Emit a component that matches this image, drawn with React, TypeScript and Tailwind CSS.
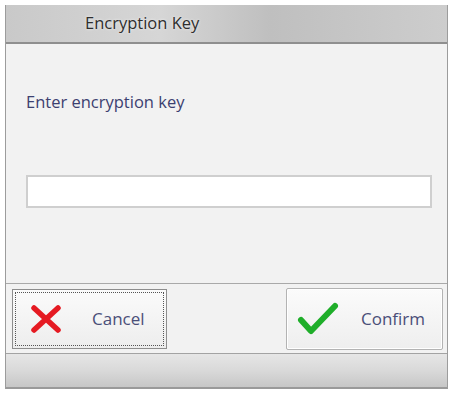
function IcnCross() {
  return (
    <svg width="32" height="28" viewBox="0 0 32 28" fill="none" stroke="#e51a22" strokeWidth="5.5" strokeLinecap="round">
      <path d="M4 3l24 22M28 3L4 25" />
    </svg>
  )
}

function IcnCheck() {
  return (
    <svg width="42" height="34" viewBox="0 0 42 34" fill="none" stroke="#1fae2a" strokeWidth="6" strokeLinecap="round" strokeLinejoin="round">
      <path d="M4 18l10 11L38 4" />
    </svg>
  )
}

export default function App() {
  return (
    <div className="w-[451px] h-[396px] bg-white pt-[5px] pl-[5px]" style={{ fontFamily: '"Open Sans", "Noto Sans", sans-serif' }}>
      <div className="w-[443px] border-x border-[#9c9c9c] bg-[#f2f2f2]">
        {/* Title bar */}
        <div className="h-[39px] flex items-center pl-[79px] border-b-2 border-[#8f8f8f] bg-[linear-gradient(90deg,#c9c9c9_0%,#d6d6d6_35%,#bfbfbf_60%,#cdcdcd_100%)]">
          <span className="text-[16.5px] text-[#2e2e2e] [text-shadow:0_0_3px_rgba(255,255,255,0.8)]">Encryption Key</span>
        </div>

        {/* Body */}
        <div className="h-[240px] pl-[20px] pr-[15px] pt-[46px] border-b border-[#a9a9a9]">
          <p className="text-[16.5px] text-[#3c4070] leading-[24px]">Enter encryption key</p>
          <div className="mt-[61px] h-[33px] bg-white border-2 border-[#cfcfcf]" />
        </div>

        {/* Buttons */}
        <div className="h-[69px] flex items-center justify-between pl-[6px] pr-[4px] pt-[1px]">
          <button className="w-[155px] h-[60px] border border-[#8d8d8d] p-[2px] bg-[linear-gradient(180deg,#fbfbfb_0%,#ededed_100%)]">
            <div className="w-full h-full border border-dotted border-[#555] flex items-center pl-[14px]">
              <IcnCross />
              <span className="ml-[30px] text-[17px] text-[#4a4e78]">Cancel</span>
            </div>
          </button>
          <button className="w-[157px] h-[62px] border border-[#b3b3b3] rounded-[2px] flex items-center pl-[10px] bg-[linear-gradient(180deg,#fbfbfb_0%,#eeeeee_100%)] shadow-[inset_0_0_0_1px_#fff]">
            <IcnCheck />
            <span className="ml-[22px] text-[17px] text-[#4a4e78]">Confirm</span>
          </button>
        </div>

        {/* Bottom strip */}
        <div className="h-[36px] border-t border-[#a3a3a3] border-b-2 border-b-[#9a9a9a] bg-[linear-gradient(180deg,#e6e6e6_0%,#d9d9d9_50%,#c7c7c7_100%)]" />
      </div>
    </div>
  )
}
